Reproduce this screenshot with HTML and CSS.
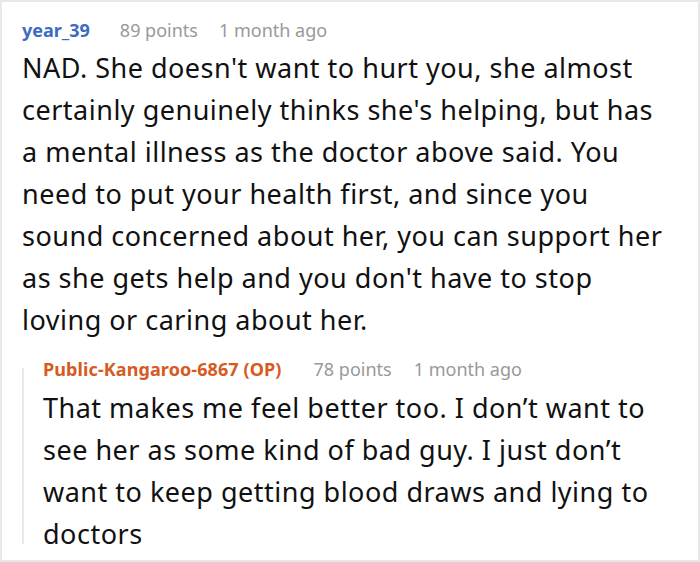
FILE: index.html
```html
<!DOCTYPE html>
<html>
<head>
<meta charset="utf-8">
<link rel="stylesheet" href="styles.css">
</head>
<body>
<div class="frame">
  <div class="comment">
    <div class="meta">
      <span class="author">year_39</span>
      <span class="stat">89 points</span>
      <span class="stat">1 month ago</span>
    </div>
    <p class="body">NAD. She doesn't want to hurt you, she almost certainly genuinely thinks she's helping, but has a mental illness as the doctor above said. You need to put your health first, and since you sound concerned about her, you can support her as she gets help and you don't have to stop loving or caring about her.</p>
    <div class="reply">
      <div class="thread"></div>
      <div class="reply-content">
        <div class="meta">
          <span class="author op">Public-Kangaroo-6867 (OP)</span>
          <span class="stat">78 points</span>
          <span class="stat">1 month ago</span>
        </div>
        <p class="body">That makes me feel better too. I don’t want to see her as some kind of bad guy. I just don’t want to keep getting blood draws and lying to doctors</p>
      </div>
    </div>
  </div>
</div>
</body>
</html>
```
FILE: styles.css
```css
html, body { margin: 0; padding: 0; background: #fff; }
.frame {
  width: 700px;
  height: 562px;
  box-sizing: border-box;
  border: 2px solid #e8e8e8;
  overflow: hidden;
  font-family: "Noto Sans", sans-serif;
}
.comment { padding: 13px 26px 0 20px; }
.meta {
  display: flex;
  align-items: baseline;
  font-size: 18px;
  line-height: 30px;
}
.author { font-weight: bold; color: #3b6cc0; margin-right: 30px; }
.author.op { color: #d75a1f; margin-right: 32px; letter-spacing: 0.1px; }
.stat { color: #999; margin-right: 21px; }
.reply .stat { margin-right: 22px; }
.body {
  margin: 2px 0 0 0;
  font-size: 27px;
  line-height: 42px;
  color: #111;
  letter-spacing: 0.5px;
}
.reply {
  margin-top: 13px;
  display: grid;
  grid-template-columns: 2px 1fr;
  column-gap: 19px;
}
.thread {
  background: #e8e8e8;
  margin: 14px 0 11px 0;
}
.reply .body { margin-top: 3px; }
```
